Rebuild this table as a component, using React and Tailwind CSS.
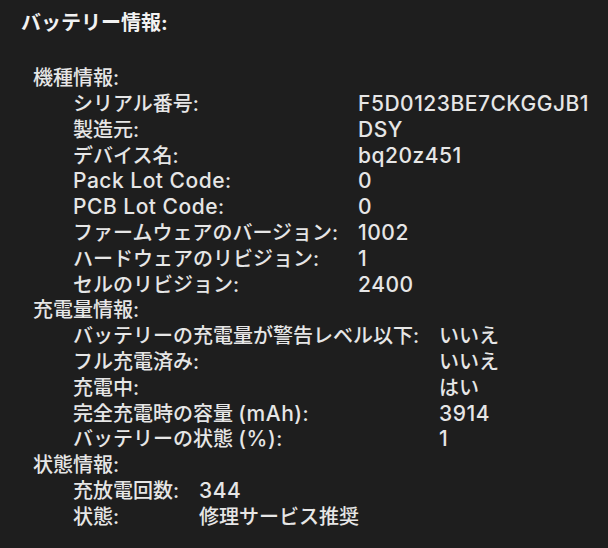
import React from "react";

const groups = [
  {
    title: "機種情報:",
    rows: [
      ["シリアル番号:", "F5D0123BE7CKGGJB1"],
      ["製造元:", "DSY"],
      ["デバイス名:", "bq20z451"],
      ["Pack Lot Code:", "0"],
      ["PCB Lot Code:", "0"],
      ["ファームウェアのバージョン:", "1002"],
      ["ハードウェアのリビジョン:", "1"],
      ["セルのリビジョン:", "2400"],
    ],
  },
  {
    title: "充電量情報:",
    rows: [
      ["バッテリーの充電量が警告レベル以下:", "いいえ"],
      ["フル充電済み:", "いいえ"],
      ["充電中:", "はい"],
      ["完全充電時の容量 (mAh):", "3914"],
      ["バッテリーの状態 (%):", "1"],
    ],
  },
  {
    title: "状態情報:",
    rows: [
      ["充放電回数:", "344"],
      ["状態:", "修理サービス推奨"],
    ],
  },
];

function T({ text }) {
  const parts = text.split(/([A-Za-z0-9%()][A-Za-z0-9%() ]*[A-Za-z0-9%()]|[A-Za-z0-9%()])/);
  return (
    <>
      {parts.map((p, i) =>
        i % 2 === 1 ? (
          <span key={i} className="text-[21px] leading-none tracking-[0.5px]">
            {p}
          </span>
        ) : (
          <React.Fragment key={i}>{p}</React.Fragment>
        )
      )}
    </>
  );
}

export default function App() {
  return (
    <div
      className="w-[608px] h-[548px] bg-[#1e1e1e] text-[#e6e6e6] text-[20px] leading-[25.8px] font-medium overflow-hidden"
      style={{ fontFamily: '"Inter", "Noto Sans CJK JP", sans-serif' }}
    >
      <div className="pt-[11px] pl-[21px] font-bold text-[#f2f2f2]">バッテリー情報:</div>
      <div className="mt-[29.5px]">
        {groups.map((g) => (
          <div key={g.title}>
            <div className="pl-[33px] h-[25.8px]">{g.title}</div>
            <div className="pl-[73px] grid grid-cols-[max-content_1fr] auto-rows-[25.8px] gap-x-[20px]">
              {g.rows.map(([k, v]) => (
                <React.Fragment key={k}>
                  <div className="whitespace-nowrap h-[25.8px]">
                    <T text={k} />
                  </div>
                  <div className="whitespace-nowrap h-[25.8px]">
                    <T text={v} />
                  </div>
                </React.Fragment>
              ))}
            </div>
          </div>
        ))}
      </div>
    </div>
  );
}
